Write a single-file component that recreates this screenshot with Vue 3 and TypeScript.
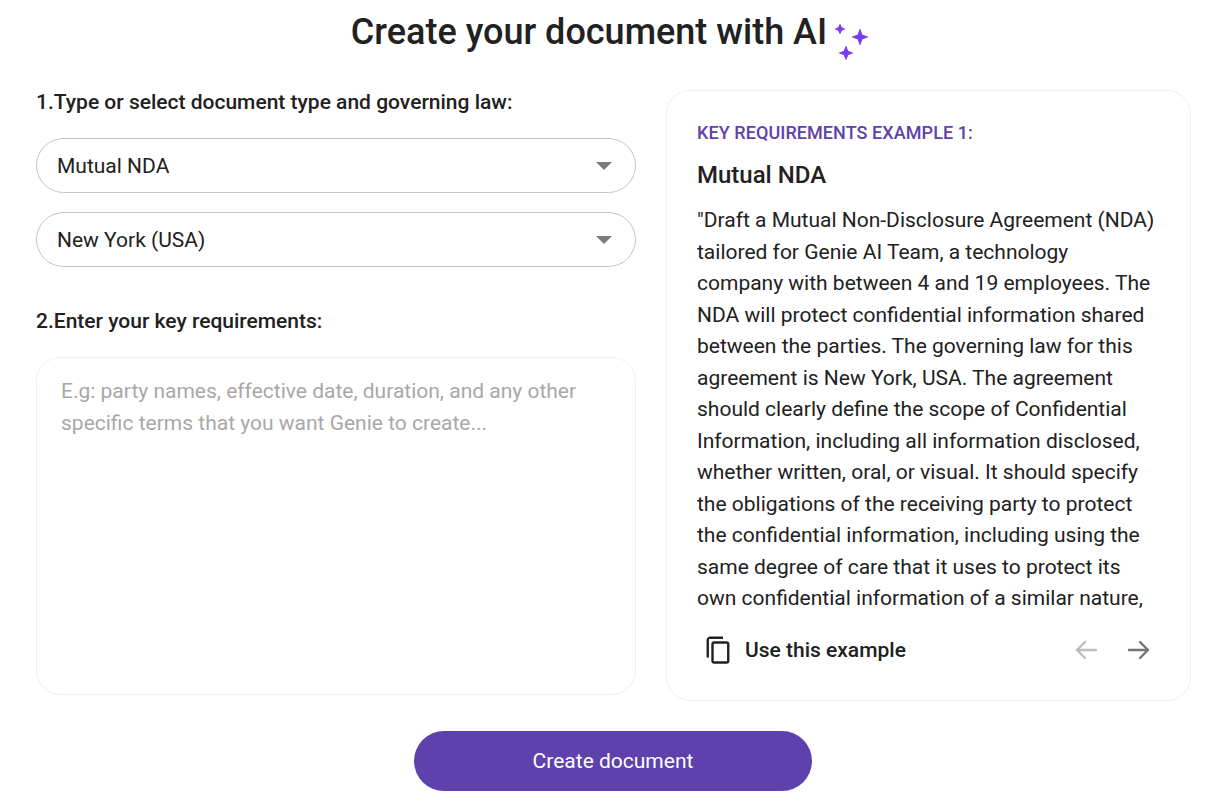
<script setup lang="ts">
const example: string = '"Draft a Mutual Non-Disclosure Agreement (NDA) tailored for Genie AI Team, a technology company with between 4 and 19 employees. The NDA will protect confidential information shared between the parties. The governing law for this agreement is New York, USA. The agreement should clearly define the scope of Confidential Information, including all information disclosed, whether written, oral, or visual. It should specify the obligations of the receiving party to protect the confidential information, including using the same degree of care that it uses to protect its own confidential information of a similar nature,'
const selects: string[] = ['Mutual NDA', 'New York (USA)']
const placeholder: string = 'E.g: party names, effective date, duration, and any other specific terms that you want Genie to create...'
</script>

<template>
  <main class="page">
    <header class="title-row">
      <h1 class="title">Create your document with AI</h1>
      <svg class="sparkles" width="38" height="44" viewBox="0 0 38 44" aria-hidden="true">
        <g fill="#7c3aed" stroke="#7c3aed" stroke-width="1" stroke-linejoin="round">
          <path d="M8 3.5 L9.4 6.6 L12.5 8 L9.4 9.4 L8 12.5 L6.6 9.4 L3.5 8 L6.6 6.6 Z" />
          <path d="M28 8.5 L30 14 L35.5 16 L30 18 L28 23.5 L26 18 L20.5 16 L26 14 Z" />
          <path d="M14 25.5 L15.8 30.2 L20.5 32 L15.8 33.8 L14 38.5 L12.2 33.8 L7.5 32 L12.2 30.2 Z" />
        </g>
      </svg>
    </header>

    <div class="columns">
      <section class="left">
        <h2 class="label first">1.Type or select document type and governing law:</h2>
        <div class="selects">
          <div v-for="item in selects" :key="item" class="select">
            <span>{{ item }}</span>
            <span class="caret"></span>
          </div>
        </div>
        <h2 class="label second">2.Enter your key requirements:</h2>
        <textarea class="requirements" :placeholder="placeholder"></textarea>
      </section>

      <aside class="card">
        <div class="eyebrow">KEY REQUIREMENTS EXAMPLE 1:</div>
        <h3 class="doc-name">Mutual NDA</h3>
        <p class="example">{{ example }}</p>
        <div class="actions">
          <div class="use">
            <svg width="30" height="30" viewBox="0 0 24 24" fill="none" stroke="#212121" stroke-width="1.9" aria-hidden="true">
              <path d="M16 2.2H5a1.8 1.8 0 0 0-1.2 1.6V18" stroke-linejoin="round" />
              <rect x="7.6" y="6" width="12.6" height="16" rx="1.4" />
            </svg>
            <span>Use this example</span>
          </div>
          <div class="arrows">
            <svg width="26" height="26" viewBox="0 0 26 26" fill="none" stroke="#bdbdbd" stroke-width="2.4" stroke-linecap="round" stroke-linejoin="round" aria-hidden="true">
              <path d="M23 13H4M12 5l-8 8 8 8" />
            </svg>
            <svg width="26" height="26" viewBox="0 0 26 26" fill="none" stroke="#757575" stroke-width="2.4" stroke-linecap="round" stroke-linejoin="round" aria-hidden="true">
              <path d="M3 13h19M14 5l8 8-8 8" />
            </svg>
          </div>
        </div>
      </aside>
    </div>

    <div class="submit-row">
      <button class="submit" type="button">Create document</button>
    </div>
  </main>
</template>

<style scoped>
.page {
  width: 1230px;
  height: 806px;
  box-sizing: border-box;
  overflow: hidden;
  padding: 9px 39px 0 36px;
  background: #fff;
  color: #212121;
  font-family: Roboto, "Liberation Sans", sans-serif;
}
.title-row {
  display: flex;
  justify-content: center;
  align-items: flex-start;
  height: 81px;
  padding-right: 6px;
}
.title {
  margin: 0;
  font-size: 36px;
  line-height: 46px;
  font-weight: 500;
}
.sparkles {
  margin: 12px 0 0 5px;
}
.columns {
  display: flex;
  align-items: flex-start;
  gap: 30px;
}
.left {
  width: 600px;
  flex: none;
}
.label {
  margin: 0;
  font-size: 21px;
  line-height: 26px;
  font-weight: 500;
}
.first {
  margin-top: -1px;
}
.selects {
  display: flex;
  flex-direction: column;
  gap: 19px;
  margin-top: 23px;
}
.select {
  height: 55px;
  box-sizing: border-box;
  border: 1px solid #c4c4c4;
  border-radius: 28px;
  display: flex;
  align-items: center;
  justify-content: space-between;
  padding: 0 23px 0 20px;
  font-size: 21px;
}
.caret {
  width: 0;
  height: 0;
  border-left: 8px solid transparent;
  border-right: 8px solid transparent;
  border-top: 8px solid #7b7b7b;
}
.second {
  margin-top: 41px;
}
.requirements {
  display: block;
  width: 100%;
  height: 338px;
  margin-top: 23px;
  box-sizing: border-box;
  padding: 17px 24px;
  border: 1px solid #f0f0f0;
  border-radius: 24px;
  font: 400 21px/32px Roboto, "Liberation Sans", sans-serif;
  color: #212121;
  resize: none;
  outline: none;
}
.requirements::placeholder {
  color: #a8a8a8;
  opacity: 1;
}
.card {
  width: 525px;
  height: 611px;
  flex: none;
  box-sizing: border-box;
  padding: 31px 33px 0 30px;
  border: 1px solid #f0f0f0;
  border-radius: 24px;
}
.eyebrow {
  font-size: 18px;
  line-height: 22px;
  font-weight: 500;
  letter-spacing: 0.07px;
  color: #5e41ac;
}
.doc-name {
  margin: 16px 0 0;
  font-size: 24px;
  line-height: 30px;
  font-weight: 500;
}
.example {
  margin: 15px 0 0;
  height: 410px;
  overflow: hidden;
  font-size: 21px;
  line-height: 31.5px;
}
.actions {
  display: flex;
  align-items: center;
  justify-content: space-between;
  margin-top: 20px;
  padding: 0 5px 0 6px;
}
.use {
  display: flex;
  align-items: center;
  gap: 12px;
  font-size: 21px;
  font-weight: 500;
}
.arrows {
  display: flex;
  gap: 27px;
}
.submit-row {
  display: flex;
  justify-content: center;
  margin-top: 30px;
  padding-right: 1px;
}
.submit {
  width: 398px;
  height: 60px;
  border: 0;
  border-radius: 30px;
  background: #5e41ac;
  color: #fff;
  font: 400 21px Roboto, "Liberation Sans", sans-serif;
}
</style>
